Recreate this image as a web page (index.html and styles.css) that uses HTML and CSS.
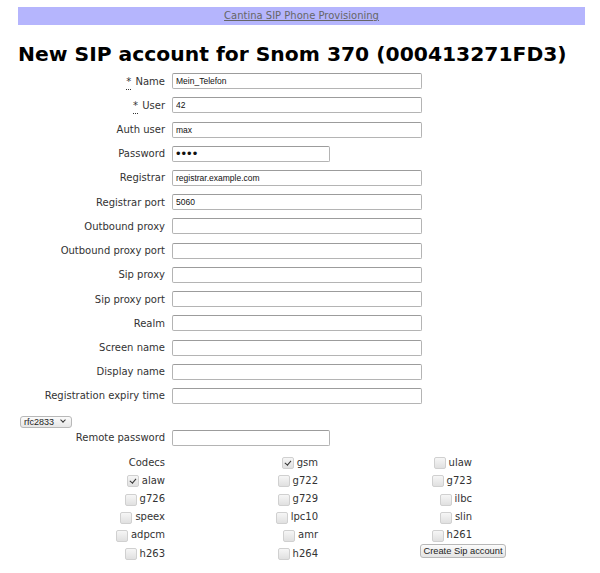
FILE: index.html
```html
<!DOCTYPE html>
<html>
<head>
<meta charset="utf-8">
<title>Cantina SIP Phone Provisioning</title>
<link rel="stylesheet" href="styles.css">
</head>
<body>
<div class="topbar"><a href="#">Cantina SIP Phone Provisioning</a></div>
<h1 class="title">New SIP account for Snom 370 (000413271FD3)</h1>
<form class="sipform">
  <div class="fields">
    <label class="lbl"><abbr class="req" title="required">*</abbr> Name</label><input class="txt" type="text" value="Mein_Telefon">
    <label class="lbl"><abbr class="req" title="required">*</abbr> User</label><input class="txt" type="text" value="42">
    <label class="lbl">Auth user</label><input class="txt" type="text" value="max">
    <label class="lbl">Password</label><input class="txt short pw" type="password" value="abcd">
    <label class="lbl">Registrar</label><input class="txt" type="text" value="registrar.example.com">
    <label class="lbl">Registrar port</label><input class="txt" type="text" value="5060">
    <label class="lbl">Outbound proxy</label><input class="txt" type="text">
    <label class="lbl">Outbound proxy port</label><input class="txt" type="text">
    <label class="lbl">Sip proxy</label><input class="txt" type="text">
    <label class="lbl">Sip proxy port</label><input class="txt" type="text">
    <label class="lbl">Realm</label><input class="txt" type="text">
    <label class="lbl">Screen name</label><input class="txt" type="text">
    <label class="lbl">Display name</label><input class="txt" type="text">
    <label class="lbl">Registration expiry time</label><input class="txt" type="text">
  </div>
  <div class="dtmf"><span class="selwrap"><select class="sel"><option>rfc2833</option><option>inband</option><option>info</option></select></span></div>
  <div class="fields remote">
    <label class="lbl">Remote password</label><input class="txt short pw" type="password">
  </div>
  <div class="codecs">
    <span class="cell c1">Codecs</span>
    <label class="cell c2"><input class="cb" type="checkbox" checked> gsm</label>
    <label class="cell c3"><input class="cb" type="checkbox"> ulaw</label>

    <label class="cell c1"><input class="cb" type="checkbox" checked> alaw</label>
    <label class="cell c2"><input class="cb" type="checkbox"> g722</label>
    <label class="cell c3"><input class="cb" type="checkbox"> g723</label>

    <label class="cell c1"><input class="cb" type="checkbox"> g726</label>
    <label class="cell c2"><input class="cb" type="checkbox"> g729</label>
    <label class="cell c3"><input class="cb" type="checkbox"> ilbc</label>

    <label class="cell c1"><input class="cb" type="checkbox"> speex</label>
    <label class="cell c2"><input class="cb" type="checkbox"> lpc10</label>
    <label class="cell c3"><input class="cb" type="checkbox"> slin</label>

    <label class="cell c1"><input class="cb" type="checkbox"> adpcm</label>
    <label class="cell c2"><input class="cb" type="checkbox"> amr</label>
    <label class="cell c3"><input class="cb" type="checkbox"> h261</label>

    <label class="cell c1"><input class="cb" type="checkbox"> h263</label>
    <label class="cell c2"><input class="cb" type="checkbox"> h264</label>
    <span class="cell c3 btncell"><button class="btn" type="button">Create Sip account</button></span>
  </div>
</form>
</body>
</html>
```
FILE: styles.css
```css
html, body {
  margin: 0;
  padding: 0;
  background: #ffffff;
}
body {
  font-family: "DejaVu Sans", Verdana, sans-serif;
  font-size: 10px;
  color: #333;
}
.topbar {
  margin: 7px 15px 0 18px;
  height: 18px;
  line-height: 18px;
  background: #b5b5fd;
  text-align: center;
  font-size: 10px;
}
.topbar a {
  color: #666;
  text-decoration: underline;
}
.title {
  margin: 17px 0 0 18px;
  font-size: 20.3px;
  line-height: 24px;
  font-weight: bold;
  color: #000;
}
.sipform {
  margin-top: 3px;
}
.fields {
  display: grid;
  grid-template-columns: 165px 1fr;
  grid-auto-rows: 24.23px;
  column-gap: 7px;
  align-items: center;
}
.lbl {
  justify-self: end;
  color: #333;
  white-space: nowrap;
}
.req {
  text-decoration: underline dotted;
  text-underline-offset: 4px;
  margin-right: 1px;
  color: #333;
}
.txt {
  box-sizing: border-box;
  width: 250px;
  height: 16px;
  margin: 0;
  padding: 0 3px;
  border: 1px solid #b4b4b4;
  border-top-color: #9c9c9c;
  border-radius: 2px;
  background: #fff;
  font-family: "Liberation Sans", Arial, sans-serif;
  font-size: 8.5px;
  color: #111;
  outline: none;
}
.txt.short {
  width: 158px;
}
.txt.pw {
  font-size: 13px;
  letter-spacing: 1px;
}
.dtmf {
  margin: 8px 0 0 20px;
  height: 12px;
  display: flex;
  align-items: center;
}
.selwrap {
  position: relative;
  display: inline-block;
}
.sel {
  -webkit-appearance: none;
  appearance: none;
  box-sizing: border-box;
  width: 52px;
  height: 12px;
  margin: 0;
  padding: 0 0 0 3px;
  border: 1px solid #b8b8b8;
  border-radius: 3px;
  background: linear-gradient(#fbfbfb, #e6e6e6);
  font-family: "Liberation Sans", Arial, sans-serif;
  font-size: 9px;
  line-height: 10px;
  color: #222;
}
.selwrap::after {
  content: "";
  position: absolute;
  left: 41px;
  top: 2px;
  width: 3px;
  height: 3px;
  border-right: 1.3px solid #333;
  border-bottom: 1.3px solid #333;
  transform: rotate(45deg);
  pointer-events: none;
}
.fields.remote {
  grid-auto-rows: 17px;
  margin-top: 1px;
}
.codecs {
  margin-top: 7px;
  display: grid;
  grid-template-columns: 165px 153px 188px;
  grid-auto-rows: 18.2px;
  align-items: center;
}
.cell {
  justify-self: end;
  display: flex;
  align-items: center;
  white-space: nowrap;
  color: #333;
}
.c3 {
  margin-right: 34px;
}
.btncell {
  margin-right: 0;
  align-self: start;
  padding-top: 0;
}
.cb {
  -webkit-appearance: none;
  appearance: none;
  box-sizing: border-box;
  width: 12px;
  height: 12px;
  margin: 2px 3px 0 0;
  border: 1px solid #d0d0d0;
  border-radius: 2px;
  background: linear-gradient(#f6f6f6, #e0e0e0);
  position: relative;
}
.cb:checked::after {
  content: "";
  position: absolute;
  left: 3.5px;
  top: 1px;
  width: 2.5px;
  height: 5px;
  border-right: 1.5px solid #333;
  border-bottom: 1.5px solid #333;
  transform: rotate(40deg);
}
.btn {
  box-sizing: border-box;
  width: 86px;
  height: 14px;
  margin: 0;
  padding: 0;
  border: 1px solid #b8b8b8;
  border-radius: 3px;
  background: linear-gradient(#fbfbfb, #e4e4e4);
  font-family: "Liberation Sans", Arial, sans-serif;
  font-size: 9.3px;
  line-height: 12px;
  color: #222;
}
```
